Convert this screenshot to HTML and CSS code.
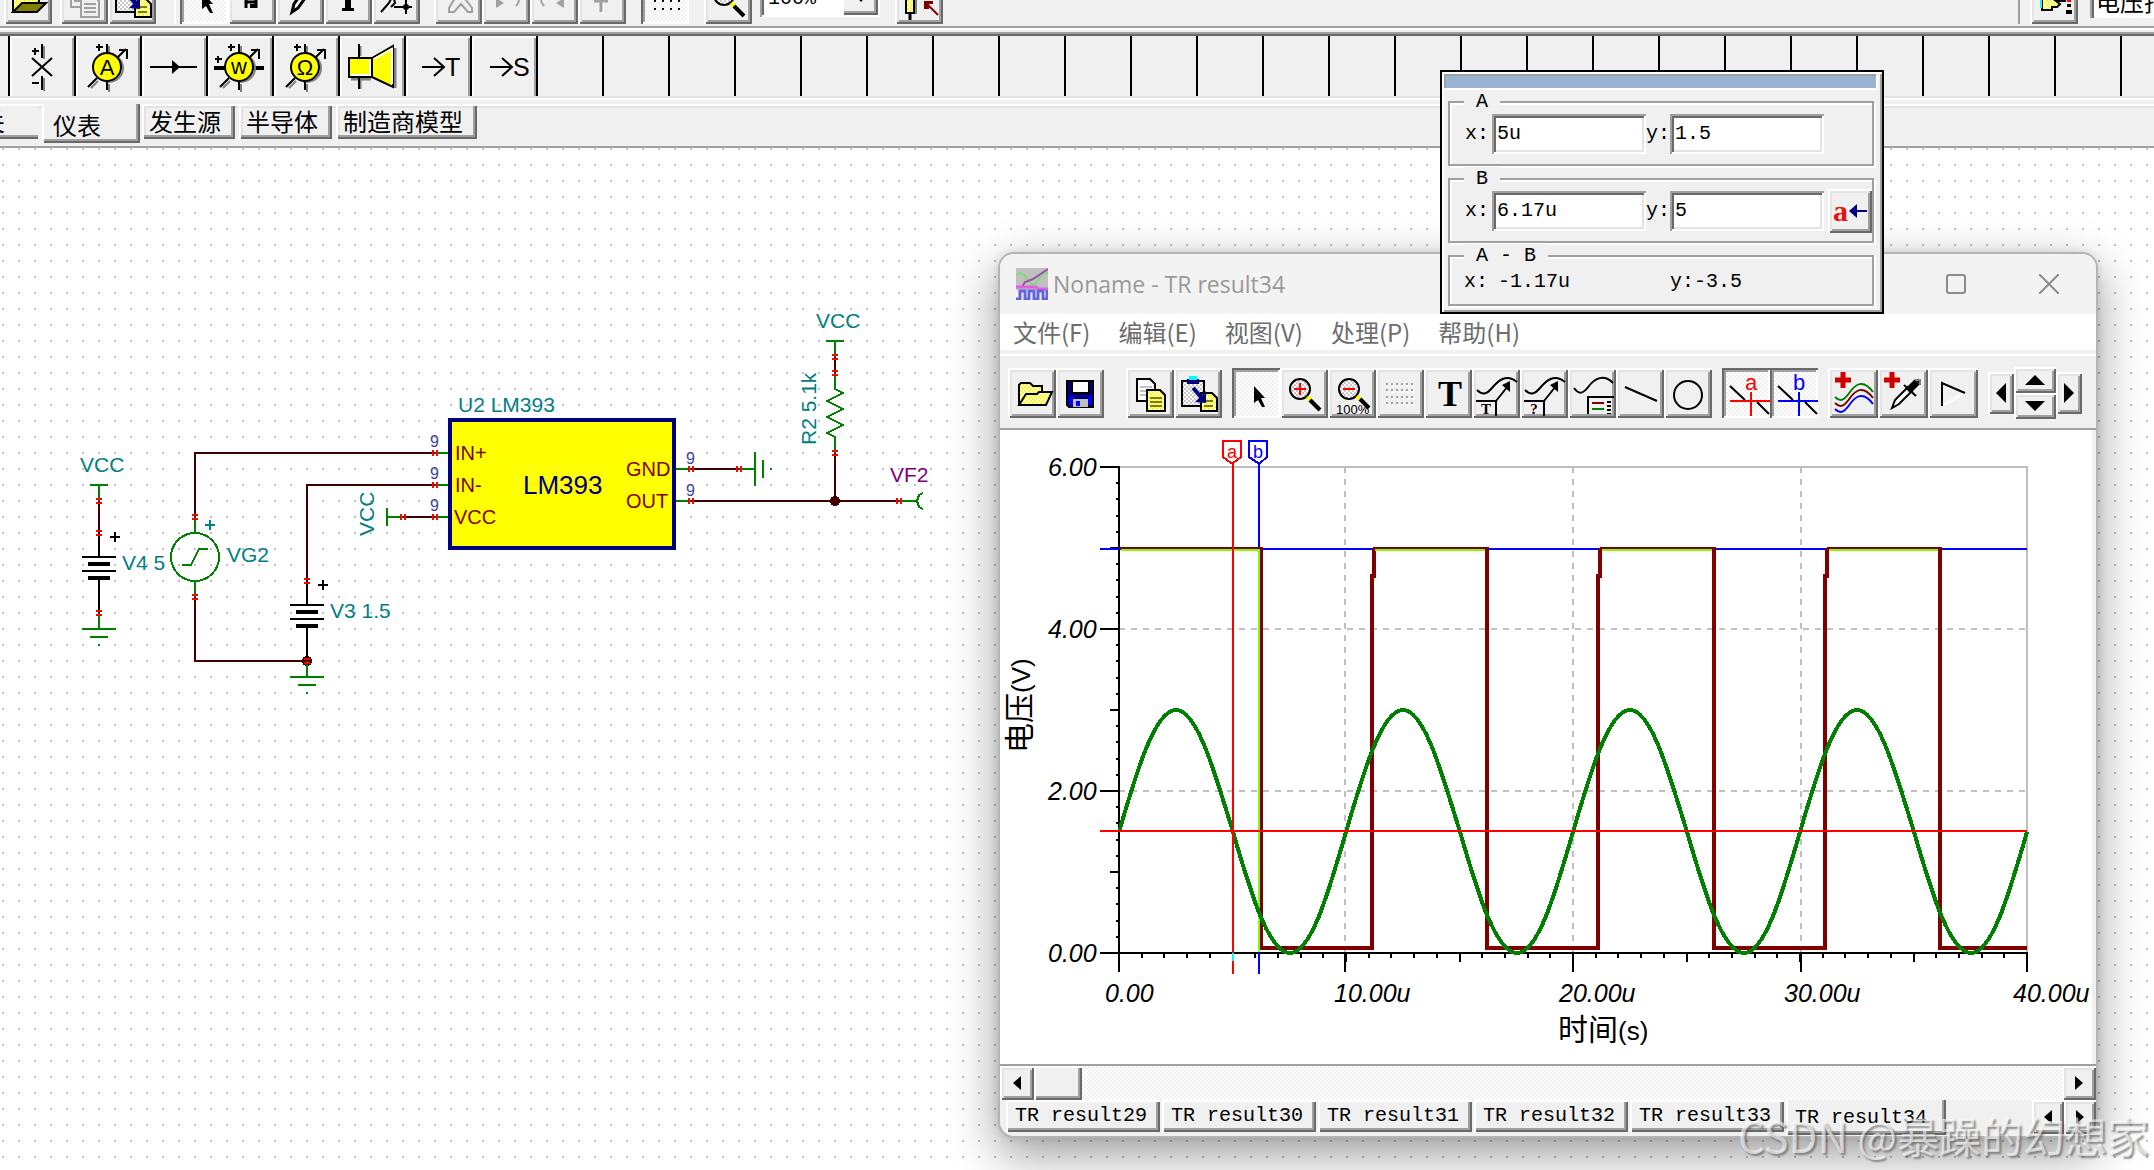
FILE: index.html
```html
<!DOCTYPE html>
<html lang="zh-CN">
<head>
<meta charset="utf-8">
<title>TINA - TR result34</title>
<link rel="stylesheet" href="styles.css">
</head>
<body>
<svg class="defs" aria-hidden="true">
  <defs>
    <pattern id="yd" width="4" height="4" patternUnits="userSpaceOnUse"><path fill="#ff0" d="M0 0h4v4H0z"/><path fill="#fff" d="M0 0h2v2H0zM2 2h2v2H2z"/></pattern>
    <pattern id="gd" width="4" height="4" patternUnits="userSpaceOnUse"><path fill="#c8c8c8" d="M0 0h4v4H0z"/><path fill="#fff" d="M0 0h2v2H0zM2 2h2v2H2z"/></pattern>
    <symbol id="i-open" viewBox="0 0 48 50"><path d="M11 37V17l2-2h9l3 3h9v6" fill="url(#yd)" stroke="#000" stroke-width="2"/><path d="M11 37l7-11h11l2-2h13l-6 13z" fill="url(#yd)" stroke="#000" stroke-width="2"/></symbol>
    <symbol id="i-opend" viewBox="0 0 48 50"><path d="M9 38V17h20v8h6v5" fill="url(#yd)" stroke="#000" stroke-width="2"/><path d="M9 38l9-9h24l-9 9z" fill="#808000" stroke="#000" stroke-width="2"/></symbol>
    <symbol id="i-save" viewBox="0 0 48 50"><path fill="#000080" stroke="#000" stroke-width="2" d="M11 13h26v26H13l-2-2z"/><path fill="#fff" stroke="#000" stroke-width="2" d="M16 13h17v12H16z"/><path fill="#00f" d="M13 28h4v9h-4zM32 28h4v9h-4z"/><path fill="#c0c0c0" d="M17 31h15v8H17z"/><path fill="#00f" d="M20 33h4v5h-4z"/></symbol>
    <symbol id="i-copy" viewBox="0 0 48 50"><path fill="#fff" stroke="#000" stroke-width="2" d="M11 11h13l5 5v17H11z"/><path fill="none" stroke="#c0c0c0" stroke-width="2" d="M14 19h12M14 23h8M14 27h8"/><path fill="url(#yd)" stroke="#000" stroke-width="2" d="M21 22h13l5 5v16H21z"/><path fill="none" stroke="#808000" stroke-width="2" d="M24 30h12M24 34h12M24 38h12"/></symbol>
    <symbol id="i-copyg" viewBox="0 0 48 50"><path fill="none" stroke="#a0a0a0" stroke-width="2" d="M11 11h13l5 5v4M11 11v22h9M14 27h8M21 22h13l5 5v16H21zM24 30h12M24 34h12M24 38h12"/></symbol>
    <symbol id="i-paste" viewBox="0 0 48 50"><path fill="url(#gd)" stroke="#000" stroke-width="2" d="M8 13h22v25H8z"/><path fill="#000080" d="M13 11h12v5H13z"/><path fill="#0ff" d="M15 8h8v4h-8z"/><path fill="url(#yd)" stroke="#000" stroke-width="2" d="M27 25h11l5 5v13H27z"/><path stroke="#808000" stroke-width="2" d="M30 33h9M30 38h9"/><path stroke="#000080" stroke-width="4" d="M19 20l9 10"/><path fill="#000080" d="M32 35v-12l-11 11z"/></symbol>
    <symbol id="i-arrow" viewBox="0 0 48 50"><path d="M22 18v17l4-3 4 7h3l-4-9h4z"/></symbol>
    <symbol id="i-zin" viewBox="0 0 48 50"><circle cx="20" cy="21" r="10" fill="url(#gd)" stroke="#000" stroke-width="2"/><path stroke="#f00" stroke-width="2" d="M14 21h12M20 15v12"/><path stroke="#ff0" stroke-width="4" d="M27 29l4 4"/><path stroke="#000" stroke-width="4" d="M30 32l10 10"/></symbol>
    <symbol id="i-zoom" viewBox="0 0 48 50"><circle cx="20" cy="21" r="10" fill="url(#gd)" stroke="#000" stroke-width="2"/><path stroke="#ff0" stroke-width="4" d="M27 29l4 4"/><path stroke="#000" stroke-width="4" d="M30 32l10 10"/></symbol>
    <symbol id="i-zout" viewBox="0 0 48 50"><circle cx="21" cy="21" r="10" fill="url(#gd)" stroke="#000" stroke-width="2"/><path stroke="#f00" stroke-width="2" d="M15 21h12"/><path stroke="#ff0" stroke-width="4" d="M29 28l4 4"/><path stroke="#000" stroke-width="4" d="M32 31l9 9"/></symbol>
    <symbol id="i-grid" viewBox="0 0 48 50"><path fill="none" stroke="#fff" stroke-width="2" stroke-dasharray="2 3" d="M11 18h30M11 24h30M11 31h30M11 37h30"/><path fill="none" stroke="#a0a0a0" stroke-width="2" stroke-dasharray="2 3" d="M10 16h29M10 22h29M10 29h29M10 35h29"/></symbol>
    <symbol id="i-gridk" viewBox="0 0 48 50"><path fill="none" stroke="#000" stroke-width="2" stroke-dasharray="2 6" d="M13 17h28M13 23h28M13 27h28M13 35h28"/></symbol>
    <symbol id="i-callout" viewBox="0 0 48 50"><path fill="none" stroke="#000" stroke-width="2" d="M5 22c5 5 9 5 15-2S34 5 45 14M4 33h20v15M24 33l12-15"/><path d="M38 13v11l-8-7z"/></symbol>
    <symbol id="i-legend" viewBox="0 0 48 50"><path fill="none" stroke="#000" stroke-width="2" d="M6 20c5 7 9 6 15-2s15-12 24-3M20 46V29h26"/><path stroke="#800000" stroke-width="2" d="M24 35h12"/><path stroke="#008000" stroke-width="2" d="M24 41h12"/><path stroke="#000" stroke-width="4" stroke-dasharray="2 2" d="M41 33v13"/></symbol>
    <symbol id="i-line" viewBox="0 0 48 50"><path stroke="#000" stroke-width="2" d="M9 19l32 14"/></symbol>
    <symbol id="i-circle" viewBox="0 0 48 50"><circle cx="24" cy="27" r="14" fill="none" stroke="#000" stroke-width="2"/></symbol>
    <symbol id="i-cursor" viewBox="0 0 48 50"><path stroke="#000" stroke-width="2" d="M8 18l15 14M35 34l12 12"/><path stroke="currentColor" stroke-width="2" d="M8 33h40M29 24v24"/></symbol>
    <symbol id="i-curves" viewBox="0 0 48 50"><path stroke="#d00000" stroke-width="5" d="M6 12h16M14 4v16"/><g fill="none" stroke-width="2"><path stroke="#008000" d="M6 29c6 6 10 2 15-5s13-14 23 0"/><path stroke="#800000" d="M6 35c6 6 10 2 15-5s13-14 23 0"/><path stroke="#00f" d="M6 41c6 6 10 2 15-5s13-14 23 0"/></g></symbol>
    <symbol id="i-drop" viewBox="0 0 48 50"><path stroke="#d00000" stroke-width="5" d="M5 12h16M13 4v16"/><path fill="#fff" stroke="#000" stroke-width="2" d="M13 40l3-8 13-13 4 4-13 13z"/><path stroke="#000" stroke-width="7" d="M29 23l9-9"/><path stroke="#000" stroke-width="2" d="M25 17l12 11"/><path stroke="#808080" stroke-width="2" d="M36 12h5v5"/></symbol>
    <symbol id="i-play" viewBox="0 0 48 50"><path fill="none" stroke="#fff" stroke-width="2" d="M14 37l22-12"/><path fill="none" stroke="#000" stroke-width="2" d="M13 38V15l23 10"/></symbol>
    <g id="meter"><path stroke="#808080" stroke-width="2" d="M35 10v7M35 48v8M17 52l7-7"/><circle cx="35" cy="32" r="14" fill="none" stroke="#808080" stroke-width="2"/><circle cx="33" cy="31" r="14" fill="#ff0" stroke="#000" stroke-width="2"/><path fill="none" stroke="#000" stroke-width="2" d="M33 8v8M33 46v8M14 51l9-9M44 21l8-8M45 14h8v9M22 11h7M25 8v7"/></g>
    <g id="mv"><path fill="#f00" d="M-3-3h6v2h-6zM-3 1h6v2h-6z"/></g>
    <g id="mh"><path fill="#f00" d="M-3-3v6h2v-6zM1-3v6h2v-6z"/></g>
    <g id="battery" stroke="#000" fill="none"><path stroke-width="2" d="M0-24V0M-17 0h34M-17 14h34M0 22v34M11-20h10M16-25v10"/><path stroke-width="4" d="M-11 7h22M-11 21h22"/></g>
    <path id="gnd" fill="none" stroke="#008000" stroke-width="2" d="M0 0v16M-17 16h34M-9 24h18M-1 32h2"/>
    <path id="vcc" fill="none" stroke="#008000" stroke-width="2" d="M-9 0h18M0 0v16"/>
    <path id="sine" fill="none" stroke="#008000" stroke-width="4" d="M1119 832c18-62 36-122 57-122s38 60 57 122c18 62 36 121 57 121s38-59 56-121"/>
    <path id="pulse" fill="none" stroke="#800000" stroke-width="4" d="M1261 547V948H1372V576h2v-28"/>
  </defs>
</svg>

<header class="toolbar">
  <div class="tgroup"><button class="tb" aria-label="打开"><svg><use href="#i-opend"/></svg></button></div>
  <div class="tgroup g2"><button class="tb" aria-label="复制"><svg><use href="#i-copyg"/></svg></button><button class="tb" aria-label="粘贴"><svg><use href="#i-paste"/></svg></button></div>
  <i class="sep"></i>
  <div class="tgroup">
    <button class="tb pressed" aria-label="选择"><svg><use href="#i-arrow"/></svg></button>
    <button class="tb" aria-label="元件"><svg viewBox="0 0 48 50"><path fill="none" stroke="#000" stroke-width="3" d="M18 24v10M28 24v10M18 28h10"/><path d="M22 30h7v4h-7z"/></svg></button>
    <button class="tb" aria-label="导线"><svg viewBox="0 0 48 50"><path fill="#fff" stroke="#000" stroke-width="3" d="M16 38l2-8 10-14 4 4-10 14z"/></svg></button>
    <button class="tb" aria-label="文本"><svg viewBox="0 0 48 50"><path d="M21 14h6v20h3v3H18v-3h3z"/></svg></button>
    <button class="tb" aria-label="连接"><svg viewBox="0 0 48 50"><path fill="none" stroke="#000" stroke-width="2" d="M9 38l8-9 4-8 2 8-4 4M22 33h18M34 26v14"/><circle cx="34" cy="33" r="3"/></svg></button>
  </div>
  <div class="tgroup g4">
    <button class="tb" aria-label="剪切"><svg viewBox="0 0 48 50"><path fill="none" stroke="#a0a0a0" stroke-width="2" d="M21 24l-6 10v4h5l7-8 7 8h4v-4l-6-8-5-4"/></svg></button>
    <button class="tb" aria-label="撤销"><svg viewBox="0 0 48 50"><path fill="#a0a0a0" d="M14 24v10l8-5z"/><path fill="none" stroke="#a0a0a0" stroke-width="2" d="M33 20c5 4 5 8 1 12"/></svg></button>
    <button class="tb" aria-label="重做"><svg viewBox="0 0 48 50"><path fill="#a0a0a0" d="M34 24v10l-8-5z"/><path fill="none" stroke="#a0a0a0" stroke-width="2" d="M15 20c-5 4-5 8-1 12"/></svg></button>
    <button class="tb" aria-label="向上"><svg viewBox="0 0 48 50"><path fill="none" stroke="#fff" stroke-width="2" d="M25 20v20"/><path fill="none" stroke="#a0a0a0" stroke-width="3" d="M16 27h14M23 20v18"/></svg></button>
  </div>
  <div class="tgroup g5"><button class="tb pressed" aria-label="网格"><svg><use href="#i-gridk"/></svg></button></div>
  <div class="tgroup g5"><button class="tb" aria-label="缩放"><svg><use href="#i-zoom"/></svg></button></div>
  <div class="zoombox"><select aria-label="缩放比例"><option>100%</option></select><span class="drop"><svg viewBox="0 0 12 8"><path d="M0 0h12L6 7z"/></svg></span></div>
  <div class="tgroup g6"><button class="tb" aria-label="探针"><svg viewBox="0 0 48 50"><path fill="url(#yd)" stroke="#000" stroke-width="2" d="M11 10h8v29h-8z"/><path stroke="#000" stroke-width="3" d="M15 40v6"/><path stroke="#808080" stroke-width="2" d="M21 12v28"/><path fill="#800000" d="M29 27h9v3h-4v5h-5z"/><path stroke="#800000" stroke-width="2" d="M32 30l11 11"/></svg></button></div>
  <i class="sep far"></i>
  <div class="tgroup g7"><button class="tb" aria-label="指针"><svg viewBox="0 0 48 50"><path fill="url(#yd)" stroke="#000" stroke-width="2" d="M12 18h12l11 4v5h-9l4 3-3 3h-5v3H12z"/><path stroke="#0ff" stroke-width="2" d="M11 14v20"/><path stroke="#f00" stroke-width="4" d="M39 20v8"/><path stroke="#000" stroke-width="4" d="M39 30v3"/><path d="M36 36h6v4h-6z"/></svg></button></div>
  <input class="pointer" aria-label="指针类型" value="电压指针">
</header>

<div class="palette">
  <button class="cell" aria-label="电压表"><svg viewBox="0 0 66 60"><path stroke="#808080" stroke-width="2" d="M36 10v13M36 42v13"/><path fill="none" stroke="#000" stroke-width="2" d="M34 8v14M34 40v14M24 22l20 18M44 22L24 40M24 15h7M27 12v7M24 47h7"/></svg></button>
  <button class="cell" aria-label="电流表"><svg viewBox="0 0 66 60"><use href="#meter"/><text x="33" y="39" text-anchor="middle">A</text></svg></button>
  <button class="cell" aria-label="箭头"><svg viewBox="0 0 66 60"><path stroke="#000" stroke-width="2" d="M10 31h47"/><path d="M32 24l8 7-8 7z"/></svg></button>
  <button class="cell" aria-label="功率表"><svg viewBox="0 0 66 60"><path stroke="#000" stroke-width="4" d="M8 32h50"/><use href="#meter"/><path stroke="#000" stroke-width="2" d="M9 23h7M12 20v7"/><text x="33" y="38" text-anchor="middle">w</text></svg></button>
  <button class="cell" aria-label="欧姆表"><svg viewBox="0 0 66 60"><use href="#meter"/><text x="33" y="39" text-anchor="middle">Ω</text></svg></button>
  <button class="cell" aria-label="扬声器"><svg viewBox="0 0 66 60"><path stroke="#808080" stroke-width="3" d="M22 10v10M22 43v10M57 12v40M13 43h20"/><path stroke="#000" stroke-width="2" d="M21 8v45"/><path fill="#ff0" stroke="#000" stroke-width="2" d="M11 22h23v19H11z"/><path fill="#ff0" stroke="#000" stroke-width="2" d="M34 22l21-12v41L34 41z"/><path fill="none" stroke="#fff" stroke-width="2" d="M13 39h19V24M36 23l18-10v35"/></svg></button>
  <button class="cell" aria-label="T"><svg viewBox="0 0 66 60"><path fill="none" stroke="#000" stroke-width="2" d="M18 31h22M30 22l10 9-10 9"/><text class="stick" x="41" y="40">T</text></svg></button>
  <button class="cell" aria-label="S"><svg viewBox="0 0 66 60"><path fill="none" stroke="#000" stroke-width="2" d="M20 31h22M32 22l10 9-10 9"/><text class="stick" x="43" y="40">S</text></svg></button>
</div>

<nav class="cats">
  <button class="cat cut">开关</button><button class="cat on">仪表</button><button class="cat">发生源</button><button class="cat">半导体</button><button class="cat">制造商模型</button>
</nav>

<main class="sheet">
  <svg class="circuit" viewBox="0 148 980 600" shape-rendering="crispEdges">
    <g fill="none" stroke="#400000" stroke-width="2">
      <path d="M99 501v32M435 453H195v64M435 485H307v96M195 597v64h112M403 517h32M691 469h48M691 501h208M835 357v16M835 453v48"/>
    </g>
    <g fill="none" stroke="#008000" stroke-width="2">
      <path d="M195 517v16M195 581v16M182 565h9l8-16h9M435 453h13M435 485h13M435 517h13M387 508v18M387 517h16"/>
      <circle cx="195" cy="557" r="24"/>
      <path d="M676 469h15M739 469h16M755 452v34M763 460v18M771 468v2M676 501h15M899 501h18M923 493l-4 2-2 6 2 6 4 2M835 373v16l8 4-16 8 16 8-16 8 16 8-16 8 8 4v16"/>
    </g>
    <circle cx="307" cy="661" r="5" fill="#400000"/><circle cx="835" cy="501" r="5" fill="#400000"/>
    <use href="#vcc" x="99" y="485"/><use href="#vcc" x="835" y="341"/>
    <use href="#gnd" x="99" y="613"/><use href="#gnd" x="307" y="661"/>
    <use href="#battery" x="99" y="557"/><use href="#battery" x="307" y="605"/>
    <use href="#mv" x="99" y="501"/><use href="#mv" x="99" y="533"/><use href="#mv" x="99" y="613"/><use href="#mv" x="195" y="517"/><use href="#mv" x="195" y="597"/><use href="#mv" x="307" y="581"/><use href="#mv" x="307" y="661"/><use href="#mv" x="835" y="357"/><use href="#mv" x="835" y="373"/><use href="#mv" x="835" y="453"/>
    <use href="#mh" x="435" y="453"/><use href="#mh" x="435" y="485"/><use href="#mh" x="435" y="517"/><use href="#mh" x="403" y="517"/><use href="#mh" x="691" y="469"/><use href="#mh" x="739" y="469"/><use href="#mh" x="691" y="501"/><use href="#mh" x="899" y="501"/>
    <rect x="450" y="420" width="224" height="128" fill="#ff0" stroke="#000080" stroke-width="4"/>
    <path stroke="#008080" stroke-width="2" d="M205 525h10M210 520v10"/>
    <g class="name">
      <text x="80" y="472">VCC</text><text x="122" y="570">V4 5</text><text x="227" y="562">VG2</text><text x="330" y="618">V3 1.5</text>
      <text x="458" y="412">U2 LM393</text><text x="816" y="328">VCC</text>
      <text transform="translate(374 536) rotate(-90)">VCC</text><text transform="translate(816 445) rotate(-90)">R2 5.1k</text>
      <text class="probe" x="890" y="482">VF2</text>
    </g>
    <g class="pin"><text x="455" y="460">IN+</text><text x="455" y="492">IN-</text><text x="454" y="524">VCC</text><text x="626" y="476">GND</text><text x="626" y="508">OUT</text></g>
    <g class="num"><text x="430" y="447">9</text><text x="430" y="479">9</text><text x="430" y="511">9</text><text x="686" y="464">9</text><text x="686" y="496">9</text></g>
    <text class="chip" x="523" y="494">LM393</text>
  </svg>
</main>

<section class="win" aria-label="TR result34">
  <header class="title">
    <svg class="appicon" viewBox="0 0 32 32"><path fill="#c0c0c0" d="M0 0h32v22H0z"/><path fill="none" stroke="#7bdc7b" stroke-width="2" d="M0 7l4-2 4 2 7 9h4L27 6l5-1"/><path fill="none" stroke="#a050a0" stroke-width="2" d="M0 19h6l3-5 8-3L32 1"/><path fill="none" stroke="#e060e0" stroke-width="3" d="M0 19h20l2 2h10"/><path fill="none" stroke="#6464e0" stroke-width="3" d="M0 31h4v-8h5v8h4v-8h5v8h4v-8h5v8h4v-9"/></svg>
    <h1>Noname - TR result34</h1>
    <button class="wc" aria-label="最大化"><svg viewBox="0 0 20 20"><rect x="1" y="1" width="18" height="18" rx="2"/></svg></button>
    <button class="wc" aria-label="关闭"><svg viewBox="0 0 20 20"><path d="M0 0l20 20M20 0L0 20"/></svg></button>
  </header>
  <nav class="menu"><button>文件(F)</button><button>编辑(E)</button><button>视图(V)</button><button>处理(P)</button><button>帮助(H)</button></nav>
  <div class="tools">
    <div class="tgroup"><button class="tb" aria-label="打开"><svg><use href="#i-open"/></svg></button><button class="tb" aria-label="保存"><svg><use href="#i-save"/></svg></button></div>
    <div class="tgroup wide"><button class="tb" aria-label="复制"><svg><use href="#i-copy"/></svg></button><button class="tb" aria-label="粘贴"><svg><use href="#i-paste"/></svg></button></div>
    <div class="tgroup">
      <button class="tb pressed" aria-label="选择"><svg><use href="#i-arrow"/></svg></button>
      <button class="tb" aria-label="放大"><svg><use href="#i-zin"/></svg></button>
      <button class="tb" aria-label="100%"><svg viewBox="0 0 48 50"><use href="#i-zout"/><text class="tiny" x="8" y="46">100%</text></svg></button>
      <button class="tb" aria-label="网格"><svg><use href="#i-grid"/></svg></button>
      <button class="tb" aria-label="文本"><svg viewBox="0 0 48 50"><text class="bigt" x="26" y="38" text-anchor="middle">T</text></svg></button>
      <button class="tb" aria-label="标签"><svg viewBox="0 0 48 50"><use href="#i-callout"/><text class="smallt" x="14" y="46" text-anchor="middle">T</text></svg></button>
      <button class="tb" aria-label="查询"><svg viewBox="0 0 48 50"><use href="#i-callout"/><text class="smallt" x="14" y="46" text-anchor="middle">?</text></svg></button>
      <button class="tb" aria-label="图例"><svg><use href="#i-legend"/></svg></button>
      <button class="tb" aria-label="直线"><svg><use href="#i-line"/></svg></button>
      <button class="tb" aria-label="圆"><svg><use href="#i-circle"/></svg></button>
    </div>
    <div class="tgroup">
      <button class="tb pressed ca" aria-label="光标 a"><svg viewBox="0 0 48 50"><use href="#i-cursor"/><text x="29" y="22" text-anchor="middle">a</text></svg></button>
      <button class="tb pressed cb" aria-label="光标 b"><svg viewBox="0 0 48 50"><use href="#i-cursor"/><text x="29" y="22" text-anchor="middle">b</text></svg></button>
    </div>
    <div class="tgroup big"><button class="tb" aria-label="添加曲线"><svg><use href="#i-curves"/></svg></button><button class="tb" aria-label="取色"><svg><use href="#i-drop"/></svg></button><button class="tb" aria-label="后处理"><svg><use href="#i-play"/></svg></button></div>
    <div class="spin">
      <button class="tb side" aria-label="左"><svg viewBox="0 0 10 20"><path d="M10 0v20L0 10z"/></svg></button>
      <div class="ud"><button class="tb" aria-label="上"><svg viewBox="0 0 20 10"><path d="M0 10h20L10 0z"/></svg></button><button class="tb" aria-label="下"><svg viewBox="0 0 20 10"><path d="M0 0h20L10 10z"/></svg></button></div>
      <button class="tb side" aria-label="右"><svg viewBox="0 0 10 20"><path d="M0 0v20l10-10z"/></svg></button>
    </div>
  </div>
  <div class="plot">
    <svg viewBox="1000 430 1092 634" shape-rendering="crispEdges">
      <path fill="none" stroke="#c0c0c0" stroke-width="2" d="M1119 467H2027V953"/>
      <path fill="none" stroke="#c0c0c0" stroke-width="2" stroke-dasharray="6 6" d="M1119 629H2027M1119 791H2027M1345 467V953M1573 467V953M1801 467V953"/>
      <g fill="none" stroke="#000" stroke-width="2">
        <path d="M1119 466V972M1100 953H2027V972M1100 467h19M1100 629h19M1100 791h19M1345 953v19M1573 953v19M1801 953v19"/>
      </g>
      <g fill="none" stroke="#000">
        <path stroke-width="3" stroke-dasharray="2 14.2" d="M1117 954V466"/>
        <path stroke-width="9" stroke-dasharray="2 79" d="M1114 954V466"/>
        <path stroke-width="4" stroke-dasharray="2 20.7" d="M1118 956H2028"/>
        <path stroke-width="9" stroke-dasharray="2 111.5" d="M1118 957H2028"/>
      </g>
      <path stroke="#00f" stroke-width="2" d="M1100 549H2027M1259 463V974"/>
      <use href="#pulse"/><use href="#pulse" x="226"/><use href="#pulse" x="453"/>
      <path fill="none" stroke="#800000" stroke-width="4" d="M1940 547V948H2027"/>
      <path fill="none" stroke="#800000" stroke-width="2" d="M1119 548h143M1373 548h116M1600 548h116M1827 548h115"/>
      <path fill="none" stroke="#80ff00" stroke-width="2" d="M1121 550h139M1375 550h110M1602 550h110M1829 550h109M1259 550V952"/>
      <use href="#sine"/><use href="#sine" x="227"/><use href="#sine" x="454"/><use href="#sine" x="681"/>
      <path stroke="#f00" stroke-width="2" d="M1100 831H2027M1233 463V974"/>
      <path stroke="#0ff" stroke-width="2" d="M1233 953v8"/>
      <path fill="#fff" stroke="#f00" stroke-width="2" d="M1223 441h18v16l-8 6h-2l-8-6z"/>
      <path fill="#fff" stroke="#00f" stroke-width="2" d="M1249 441h18v16l-7 6h-2l-9-6z"/>
      <g class="flag"><text x="1232" y="458" fill="#f00">a</text><text x="1258" y="458" fill="#00f">b</text></g>
      <g class="tick">
        <text x="1048" y="476">6.00</text><text x="1048" y="638">4.00</text><text x="1048" y="800">2.00</text><text x="1048" y="962">0.00</text>
        <text x="1105" y="1002">0.00</text><text x="1334" y="1002">10.00u</text><text x="1559" y="1002">20.00u</text><text x="1784" y="1002">30.00u</text><text x="2013" y="1002">40.00u</text>
      </g>
      <g class="axis"><text x="1558" y="1040">时间<tspan class="unit">(s)</tspan></text><text transform="translate(1030 753) rotate(-90)">电压<tspan class="unit">(V)</tspan></text></g>
    </svg>
  </div>
  <div class="scroll">
    <button class="tb" aria-label="向左滚动"><svg viewBox="0 0 8 14"><path d="M8 0v14L0 7z"/></svg></button>
    <span class="thumb"></span>
    <button class="tb end" aria-label="向右滚动"><svg viewBox="0 0 8 14"><path d="M0 0v14l8-7z"/></svg></button>
  </div>
  <nav class="pages">
    <button>TR result29</button><button>TR result30</button><button>TR result31</button><button>TR result32</button><button>TR result33</button><button class="on">TR result34</button>
    <div class="pager"><button class="tb" aria-label="上一页"><svg viewBox="0 0 8 14"><path d="M8 0v14L0 7z"/></svg></button><button class="tb" aria-label="下一页"><svg viewBox="0 0 8 14"><path d="M0 0v14l8-7z"/></svg></button></div>
  </nav>
</section>

<form class="dialog">
  <div class="grip"></div>
  <fieldset><legend>A</legend><div class="row">
    <label for="ax">x:</label><input id="ax" value="5u"><label for="ay">y:</label><input id="ay" value="1.5">
  </div></fieldset>
  <fieldset><legend>B</legend><div class="row">
    <label for="bx">x:</label><input id="bx" value="6.17u"><label for="by">y:</label><input id="by" value="5">
    <button type="button" class="tb copy" aria-label="复制到 a"><b>a</b><svg viewBox="0 0 18 14"><path fill="none" stroke="#000080" stroke-width="2" d="M2 7h16"/><path fill="#000080" d="M8 0v14L0 7z"/></svg></button>
  </div></fieldset>
  <fieldset class="diff"><legend>A - B</legend><div class="row"><span class="k">x:</span><output>-1.17u</output><span class="k">y:</span><output>-3.5</output></div></fieldset>
</form>

<p class="mark">CSDN @暴躁的幻想家</p>
</body>
</html>
```
FILE: styles.css
```css
* { box-sizing: border-box; }

body {
  margin: 0;
  min-height: 100vh;
  display: flex;
  flex-direction: column;
  position: relative;
  overflow: hidden;
  background: #f0f0f0;
  color: #000;
  font: 20px/24px "Liberation Mono", "Noto Sans CJK SC", monospace;
}

button, input, select { font: inherit; color: inherit; margin: 0; padding: 0; border: 0; border-radius: 0; }
.defs { position: absolute; width: 0; height: 0; }

/* raised and sunken controls */
.tb {
  width: 48px;
  height: 50px;
  flex: none;
  display: flex;
  align-items: center;
  justify-content: center;
  background: #f0f0f0;
  box-shadow: inset 2px 2px #fff, inset -2px -2px #696969, inset 4px 4px #e3e3e3, inset -4px -4px #a0a0a0;
}
.tb svg { width: 48px; height: 50px; display: block; }
.pressed {
  background: repeating-conic-gradient(#fff 0 25%, #f0f0f0 0 50%) 0 0 / 4px 4px;
  box-shadow: inset 2px 2px #696969, inset -2px -2px #fff, inset 4px 4px #a0a0a0;
}
.tgroup { display: flex; flex: none; }

/* main toolbar */
.toolbar {
  height: 28px;
  flex: none;
  display: flex;
  align-items: flex-end;
  padding: 0 0 2px 4px;
  overflow: hidden;
  border-bottom: 2px solid #a0a0a0;
}
.g2 { margin-left: 8px; }
.sep { width: 2px; height: 50px; margin: 0 4px 0 18px; background: #fff; }
.g4 { margin-left: 14px; }
.g5 { margin-left: 15px; }
.g6 { margin-left: 15px; }
.zoombox { display: flex; flex: none; width: 120px; height: 36px; margin: 0 0 7px 8px; padding: 2px; background: #fff; box-shadow: inset 2px 2px #a0a0a0, inset -2px -2px #fff, inset 4px 4px #696969; }
.zoombox select { flex: 1; min-width: 0; appearance: none; background: none; padding-left: 6px; }
.drop { width: 34px; display: flex; align-items: center; justify-content: center; background: #f0f0f0; box-shadow: inset -2px -2px #696969, inset -4px -4px #a0a0a0; }
.drop svg { width: 12px; height: 8px; }
.sep.far { margin: 0 10px 0 auto; background: #a0a0a0; }
.pointer { width: 64px; height: 36px; margin: 0 0 6px 12px; padding-left: 6px; font-size: 24px; box-shadow: inset 2px 2px #a0a0a0, inset 4px 4px #696969; }

/* component palette */
.palette {
  height: 72px;
  flex: none;
  display: flex;
  padding: 6px 0 0 8px;
  border-top: 2px solid #fff;
  box-shadow: inset 0 2px #f0f0f0, inset 0 4px #a0a0a0, inset 0 6px #696969, inset 0 -2px #fff, inset 0 -4px #e3e3e3;
  background: linear-gradient(90deg, #000 2px, transparent 0) 8px 6px / 66px 60px repeat-x;
}
.cell {
  width: 66px;
  height: 60px;
  flex: none;
  background: none;
  border-left: 2px solid #000;
  box-shadow: inset 2px 2px #fff, inset -2px 0 #a0a0a0;
}
.cell svg { display: block; width: 66px; height: 60px; margin-left: -2px; font: 22px "Liberation Sans", sans-serif; }
.cell .stick { font-size: 25px; }

.cats {
  height: 48px;
  flex: none;
  display: flex;
  align-items: flex-start;
  gap: 4px;
  padding-top: 4px;
  border-bottom: 2px solid #a0a0a0;
  background: linear-gradient(#fff 2px, #e3e3e3 2px, #e3e3e3 4px, transparent 0) 0 4px / 100% 4px no-repeat;
  font-size: 24px;
}
.cat {
  flex: none;
  height: 35px;
  padding: 4px 14px 0 7px;
  text-align: left;
  white-space: nowrap;
  background: #f0f0f0;
  line-height: 34px;
  box-shadow: inset 2px 2px #fff, inset -2px -2px #696969, inset -4px -4px #a0a0a0, inset 4px 4px #e3e3e3;
}
.cat.on { width: 98px; height: 39px; padding: 8px 0 0 11px; margin-right: -2px; box-shadow: inset 2px 0 #fff, inset -2px -2px #696969, inset -4px -4px #a0a0a0; }
.cat.cut { width: 38px; padding: 4px 33px 0 0; direction: rtl; overflow: hidden; box-shadow: inset 0 2px #fff, inset 0 -2px #696969, inset 0 -4px #a0a0a0; }

/* schematic sheet */
.sheet {
  flex: 1;
  background: conic-gradient(from 270deg at 2px 2px, #c0c0c0 90deg, #fff 0) 2px 0 / 16px 16px;
}
.circuit { display: block; width: 980px; height: 600px; }
.circuit text { font-family: "Liberation Sans", Arial, sans-serif; }
.name { font-size: 21px; fill: #008080; }
.name .probe { fill: #800080; }
.pin { font-size: 20px; fill: #800000; }
.num { font-size: 16px; fill: #4040a0; }
.chip { font-size: 26px; fill: #000080; }

/* result window */
.win {
  position: absolute;
  left: 998px;
  top: 252px;
  width: 1100px;
  border: 2px solid #b4b4b4;
  border-radius: 16px;
  overflow: hidden;
  background: #f0f0f0;
  box-shadow: 0 16px 48px rgba(0, 0, 0, .4), 0 0 8px rgba(0, 0, 0, .1);
}
.title { display: flex; align-items: center; height: 60px; padding: 0 37px 0 16px; background: #f3f3f3; }
.appicon { width: 32px; height: 32px; }
.title h1 { flex: 1; margin: 0 0 0 5px; font: 23px/32px "Open Sans", "Noto Sans", sans-serif; color: #999; }
.wc { width: 20px; height: 20px; margin-left: 73px; background: none; }
.wc svg { display: block; width: 20px; height: 20px; fill: none; stroke: #8c8c8c; stroke-width: 2; }
.menu { display: flex; gap: 28px; height: 36px; padding-left: 13px; background: #fff; }
.menu button { background: none; color: #6d6d6d; font: 24px/36px "Noto Sans CJK SC", sans-serif; white-space: nowrap; }
.tools {
  display: flex;
  align-items: center;
  gap: 10px;
  height: 80px;
  padding: 8px 8px 0;
  background: linear-gradient(#fff, #fff) 0 4px / 100% 2px no-repeat;
  border-bottom: 2px solid #a0a0a0;
}
.wide { margin: 0 0 0 12px; }
.big .tb { width: 50px; }
.tb text { font-family: "Liberation Sans", sans-serif; }
.tb .tiny { font-size: 13px; }
.tb .bigt { font: bold 36px "Liberation Serif", serif; }
.tb .smallt { font: bold 15px "Liberation Serif", serif; }
.ca, .cb { font-size: 22px; }
.ca { color: #f00; }
.cb { color: #00f; }
.ca text { fill: #f00; }
.cb text { fill: #00f; }
.spin { display: flex; align-items: center; }
.spin .side { width: 26px; height: 42px; }
.spin .side svg { width: 10px; height: 20px; }
.ud .tb { width: 42px; height: 26px; }
.ud svg { width: 20px; height: 10px; }

.plot { margin-right: 4px; background: #fff; }
.plot svg { display: block; width: 100%; height: auto; }
.plot text { font-family: "Liberation Sans", "Noto Sans CJK SC", sans-serif; }
.tick { font-size: 25px; font-style: italic; }
.axis { font-size: 30px; }
.unit { font-size: 26px; }
.flag { font-size: 18px; text-anchor: middle; }

.scroll {
  display: flex;
  height: 36px;
  border-top: 2px solid #a0a0a0;
  background: repeating-conic-gradient(#fff 0 25%, #f0f0f0 0 50%) 0 0 / 4px 4px;
}
.scroll .tb, .pager .tb { width: 34px; height: 34px; }
.scroll .tb svg, .pager .tb svg { width: 8px; height: 14px; }
.thumb { width: 48px; background: #f0f0f0; box-shadow: inset 2px 2px #fff, inset -2px -2px #696969, inset -4px -4px #a0a0a0; }
.scroll .end { margin-left: auto; }

.pages { display: flex; align-items: flex-start; gap: 2px; height: 36px; padding-left: 6px; }
.pages > button {
  width: 154px;
  height: 32px;
  padding: 0 0 0 9px;
  text-align: left;
  line-height: 28px;
  white-space: nowrap;
  background: #f0f0f0;
  box-shadow: inset 2px 2px #fff, inset -2px -2px #696969, inset -4px -4px #a0a0a0;
}
.pages .on { width: 160px; height: 35px; line-height: 36px; box-shadow: inset 2px 0 #fff, inset -2px -2px #696969, inset -4px -4px #a0a0a0; }
.pager { display: flex; margin-left: auto; }
.pager .tb { width: 32px; }

/* cursor readout */
.dialog {
  position: absolute;
  left: 1440px;
  top: 70px;
  width: 444px;
  padding: 2px 8px 5px 6px;
  border: 2px solid #000;
  background: #f0f0f0;
  box-shadow: inset 2px 2px #fff, inset -2px -2px #a0a0a0;
}
.grip { height: 14px; margin: 0 -2px 2px -4px; background: #99b4d1; border: solid #a0a0a0; border-width: 2px 0 0 2px; box-shadow: 2px 2px #fff; }
fieldset { min-width: 0; margin: 0 0 1px; padding: 0 0 10px; border: 2px solid #a0a0a0; box-shadow: 2px 2px #fff, inset 2px 2px #fff; }
legend { margin-left: 14px; padding: 0 12px; background: #f0f0f0; line-height: 24px; }
.row { display: grid; grid-template-columns: 42px 154px 24px 154px 44px; align-items: center; }
.row label { padding-right: 3px; text-align: right; white-space: nowrap; }
.row label:nth-of-type(2) { padding-right: 0; }
.row input { width: 100%; min-width: 0; height: 40px; padding: 0 5px 2px; background: #fff; box-shadow: inset 2px 2px #a0a0a0, inset -2px -2px #fff, inset 4px 4px #696969, inset -4px -4px #e3e3e3; }
.row .copy { width: 44px; height: 44px; margin: -2px 0 -2px 4px; gap: 1px; }
.copy b { color: #e81010; font: bold 30px/36px "Liberation Serif", serif; }
.copy svg { width: 18px; height: 14px; }
.diff { padding-bottom: 8px; }
.diff .row { grid-template-columns: 42px 178px 24px auto; line-height: 28px; }
.diff .k:first-child { padding-left: 14px; }
.diff .k { white-space: nowrap; }
.diff output { padding-left: 6px; }
.diff output:last-child { padding-left: 0; }

.mark {
  position: absolute;
  right: 5px;
  bottom: 7px;
  margin: 0;
  color: rgba(255, 255, 255, .6);
  text-shadow: 2px 2px 2px rgba(90, 90, 90, .65);
  font: 42px/56px "Noto Sans CJK SC", sans-serif;
  white-space: nowrap;
}
```
